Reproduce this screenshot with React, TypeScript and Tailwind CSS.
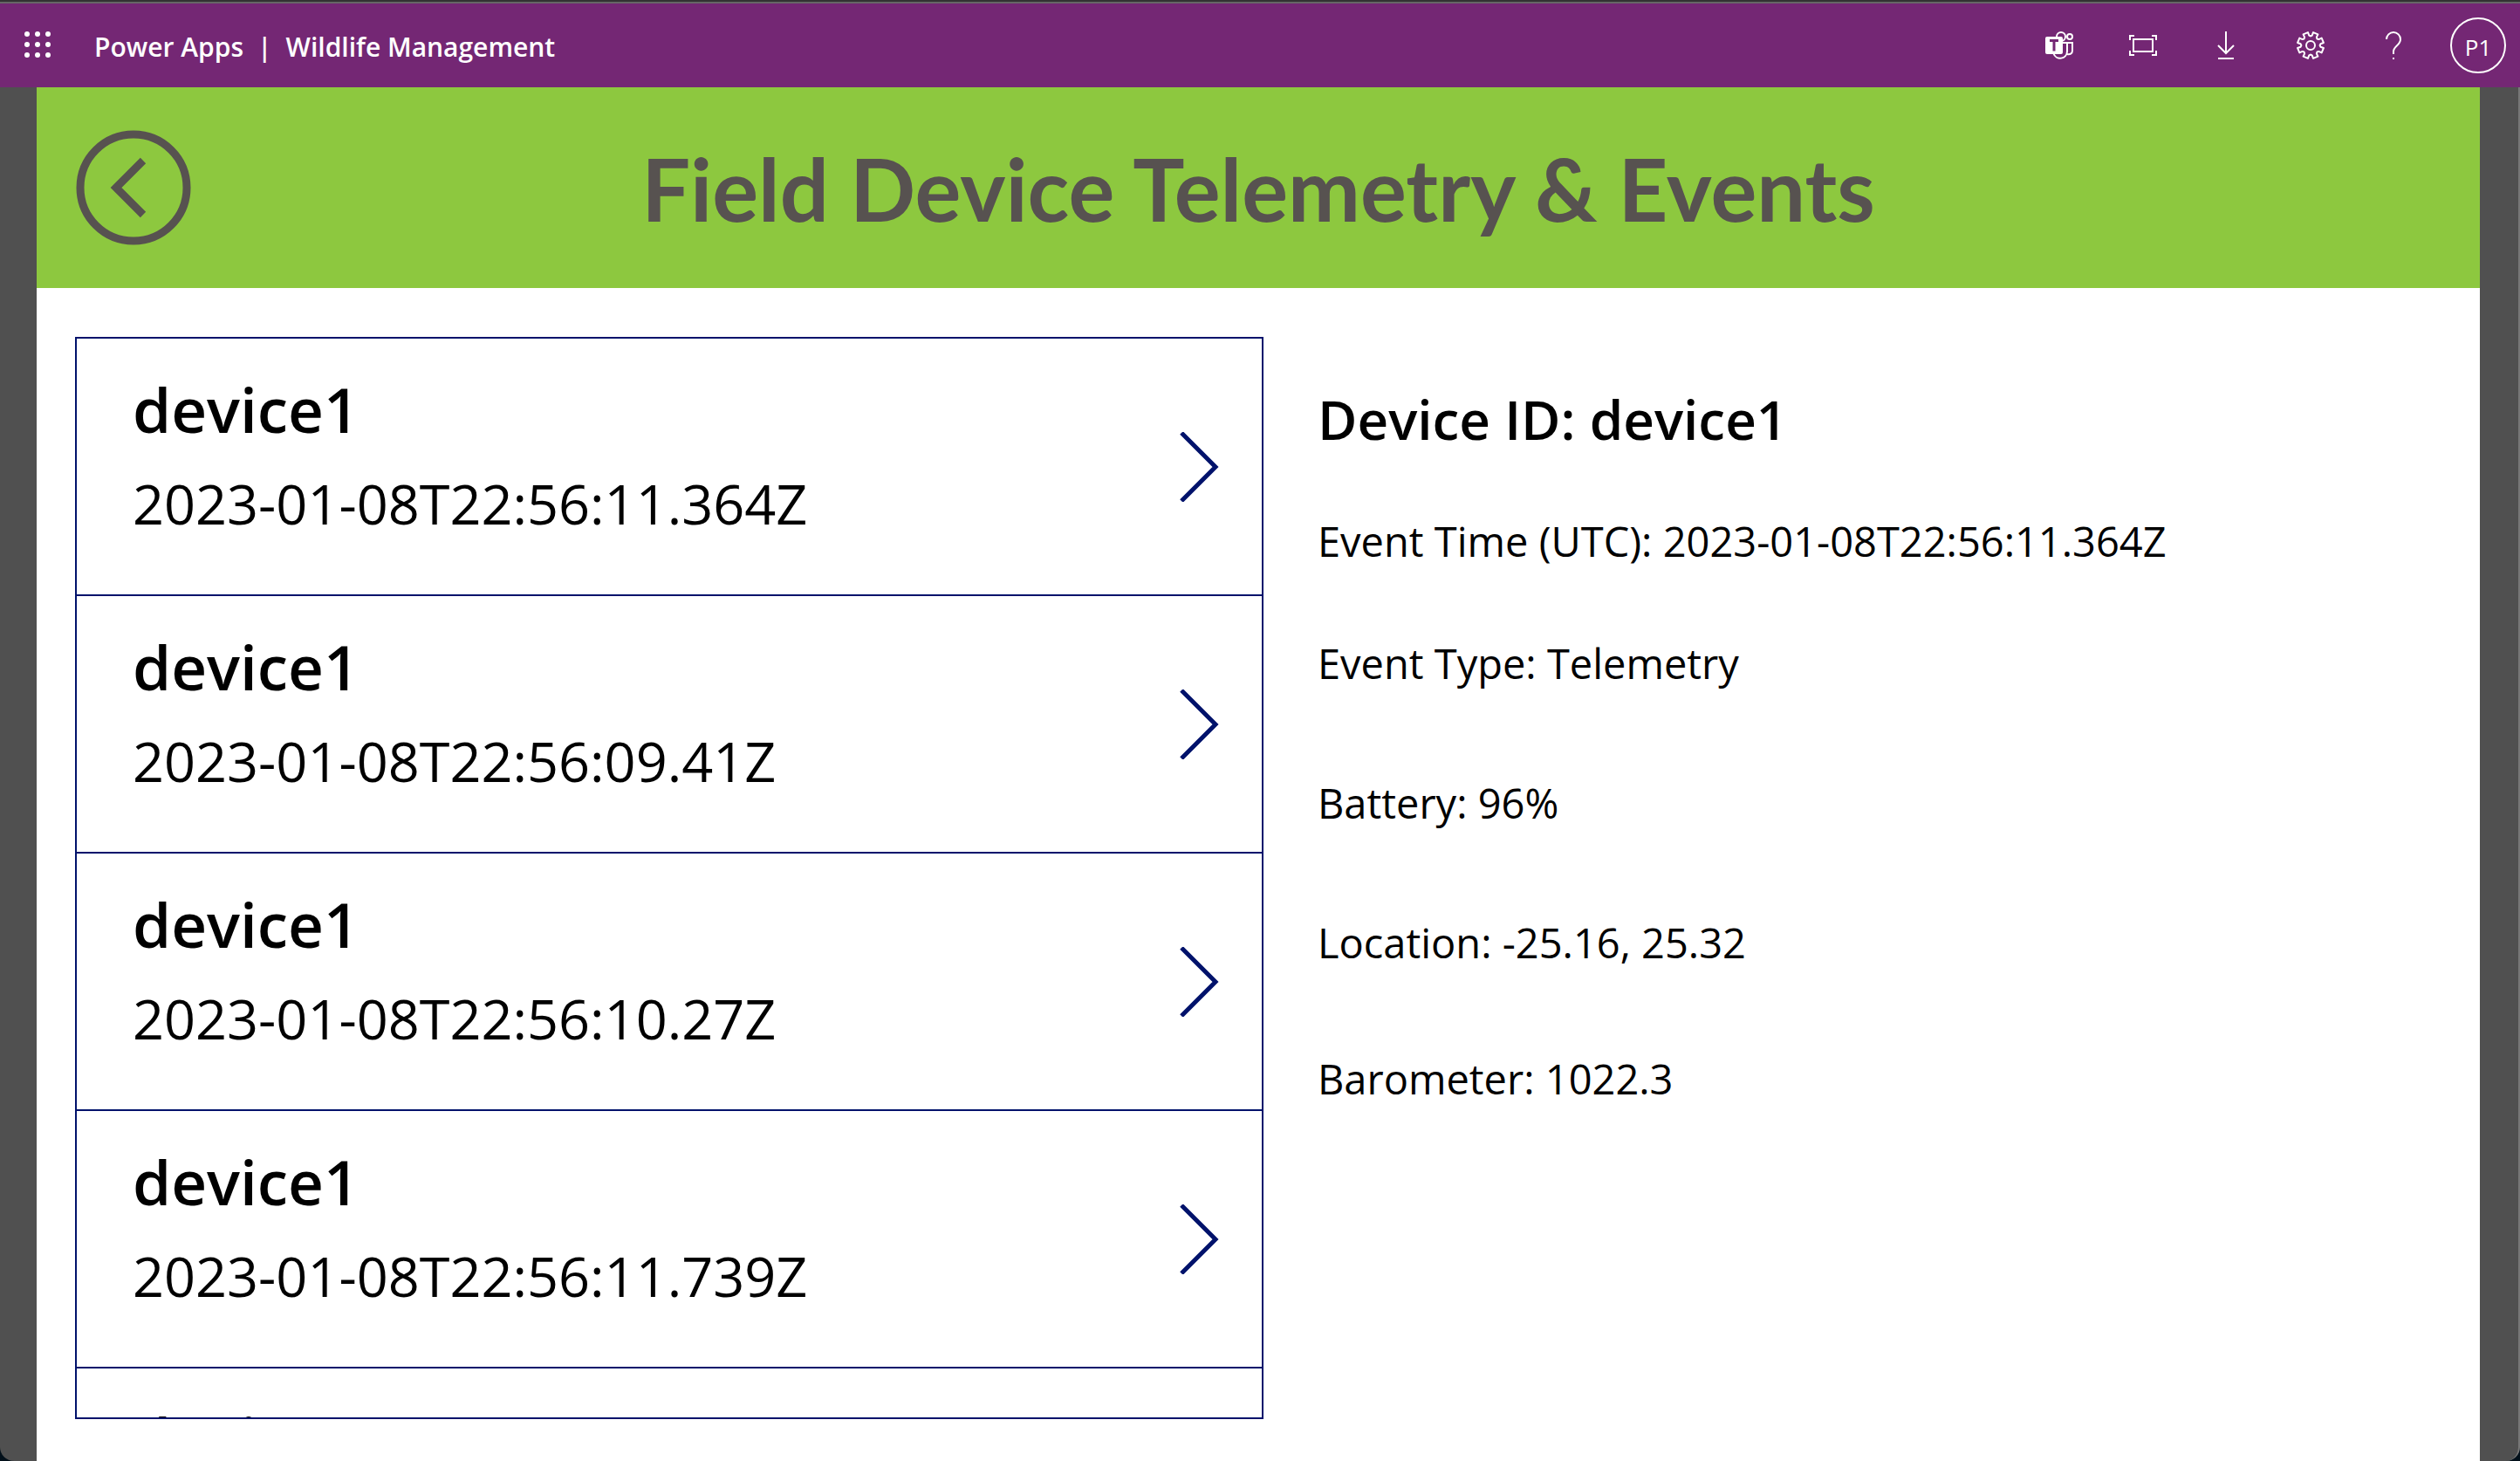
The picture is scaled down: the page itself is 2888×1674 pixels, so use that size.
import React from "react";

const events = [
  { id: "device1", time: "2023-01-08T22:56:11.364Z" },
  { id: "device1", time: "2023-01-08T22:56:09.41Z" },
  { id: "device1", time: "2023-01-08T22:56:10.27Z" },
  { id: "device1", time: "2023-01-08T22:56:11.739Z" },
  { id: "device1", time: "2023-01-08T22:56:12.104Z" },
];

function WaffleIcon() {
  return (
    <svg className="h-8 w-8" viewBox="0 0 32 32" fill="#fff">
      {[3, 15, 27].map((y) => [5, 17, 29].map((x) => <circle key={`${x}-${y}`} cx={x} cy={y} r="3" />))}
    </svg>
  );
}

function TeamsIcon() {
  return (
    <svg className="h-8 w-8" viewBox="0 0 32 32" fill="none" stroke="#fff" strokeWidth="2">
      <circle cx="18" cy="6" r="5" />
      <circle cx="28" cy="6" r="3" />
      <path d="M19 13h6v10a8 8 0 0 1-15.500 2.500" />
      <path d="M25 13h6v9c0 3.500-3 5-6 4" />
      <rect x="0" y="6" width="20" height="20" rx="2" fill="#fff" stroke="none" />
      <path d="M5 10.500h10M10 10.500V22.500" stroke="#742774" strokeWidth="3" />
    </svg>
  );
}

function FitIcon() {
  return (
    <svg className="h-8 w-8" viewBox="0 0 32 32" fill="none" stroke="#fff" strokeWidth="2">
      <rect x="5" y="9" width="22" height="14" />
      <path d="M1 10V5h5M26 5h5v5M31 22v5h-5M6 27H1v-5" />
    </svg>
  );
}

function DownloadIcon() {
  return (
    <svg className="h-8 w-8" viewBox="0 0 32 32" fill="none" stroke="#fff" strokeWidth="2">
      <path d="M15 0v25M6 16l9 9 9-9M6 31h18" />
    </svg>
  );
}

function GearIcon() {
  const pts: string[] = [];
  for (let i = 0; i < 8; i++) {
    [[-22, 10.6], [-14, 11.6], [-11, 15.2], [11, 15.2], [14, 11.6], [22, 10.6]].forEach(([a, r]) => {
      const t = ((i * 45 + 22.5 + a) * Math.PI) / 180;
      pts.push(`${(16 + r * Math.cos(t)).toFixed(2)},${(16 + r * Math.sin(t)).toFixed(2)}`);
    });
  }
  return (
    <svg className="h-8 w-8" viewBox="0 0 32 32" fill="none" stroke="#fff" strokeWidth="2" strokeLinejoin="round">
      <polygon points={pts.join(" ")} />
      <circle cx="16" cy="16" r="5" />
    </svg>
  );
}

function HelpIcon() {
  return (
    <svg className="h-8 w-8" viewBox="0 0 32 32" fill="none" stroke="#fff" strokeWidth="2">
      <path d="M7 9a8 8 0 0 1 16 0c0 7-8 8-8 14v3M15 30v2" />
    </svg>
  );
}

const actions = [
  { label: "Teams", icon: <TeamsIcon /> },
  { label: "Fit to screen", icon: <FitIcon /> },
  { label: "Download", icon: <DownloadIcon /> },
  { label: "Settings", icon: <GearIcon /> },
  { label: "Help", icon: <HelpIcon /> },
];

export default function App() {
  return (
    <div className="flex h-screen flex-col overflow-hidden border-t-2 border-[#333] bg-[#02101a] font-['Open_Sans',sans-serif] text-black">
      <header className="flex h-[98px] shrink-0 items-center justify-between border-t-2 border-[#666] bg-[#742774] pr-4 text-white">
        <div className="flex items-center">
          <button aria-label="App launcher" className="flex w-[84px] items-center justify-center">
            <WaffleIcon />
          </button>
          <div className="flex gap-4 pt-1 pl-6 text-[30px] leading-10 font-semibold">
            <a href="#">Power Apps</a>
            <span>|</span>
            <span>Wildlife Management</span>
          </div>
        </div>
        <div className="flex items-center">
          {actions.map((a) => (
            <button key={a.label} aria-label={a.label} className="flex h-24 w-24 items-center justify-center">
              {a.icon}
            </button>
          ))}
          <button className="ml-4 flex h-16 w-16 items-center justify-center rounded-full border-2 border-white pt-1 text-[26px]">P1</button>
        </div>
      </header>

      <div className="flex min-h-0 grow rounded-b-2xl border-r-2 border-[#777] bg-[#505050] pr-11 pl-[42px]">
        <main className="flex min-w-0 grow flex-col bg-white">
          <div className="grid h-[230px] shrink-0 grid-cols-[220px_1fr_220px] items-center bg-[#8dc83f] text-[#575250]">
            <button aria-label="Back" className="ml-[45px] h-33 w-33">
              <svg className="h-full w-full" viewBox="0 0 132 132" fill="none" stroke="#575250">
                <circle cx="66" cy="66" r="61" strokeWidth="9" />
                <path d="M77 35L46 66l31 31" strokeWidth="9" />
              </svg>
            </button>
            <h1 className="text-center font-['Lato',sans-serif] text-[99px] leading-none font-bold">
              Field Device Telemetry &amp; Events
            </h1>
          </div>

          <div className="flex min-h-0 grow gap-[62px] px-11 pt-14 pb-12">
            <ul className="w-[1362px] shrink-0 overflow-hidden border-2 border-[#00126b]">
              {events.map((e) => (
                <li key={e.time} className="h-[295px] border-b-2 border-[#00126b]">
                  <button className="flex h-full w-full items-center justify-between pr-12 pl-16 text-left">
                    <span className="flex flex-col gap-2 pb-6">
                      <span className="text-[71px] leading-[100px] font-semibold">{e.id}</span>
                      <span className="text-[63px] leading-[100px]">{e.time}</span>
                    </span>
                    <svg className="h-20 w-12" viewBox="0 0 48 80" fill="none" stroke="#00126b" strokeWidth="5">
                      <path d="M4 1l39 39L4 79" />
                    </svg>
                  </button>
                </li>
              ))}
            </ul>

            <section className="flex flex-col pt-12 text-[47px] leading-[80px]">
              <h2 className="text-[62px] leading-[92px] font-semibold">Device ID: device1</h2>
              <p className="mt-[54px]">Event Time (UTC): 2023-01-08T22:56:11.364Z</p>
              <p className="mt-[60px]">Event Type: Telemetry</p>
              <p className="mt-20">Battery: 96%</p>
              <p className="mt-20">Location: -25.16, 25.32</p>
              <p className="mt-[76px]">Barometer: 1022.3</p>
            </section>
          </div>
        </main>
      </div>
    </div>
  );
}
